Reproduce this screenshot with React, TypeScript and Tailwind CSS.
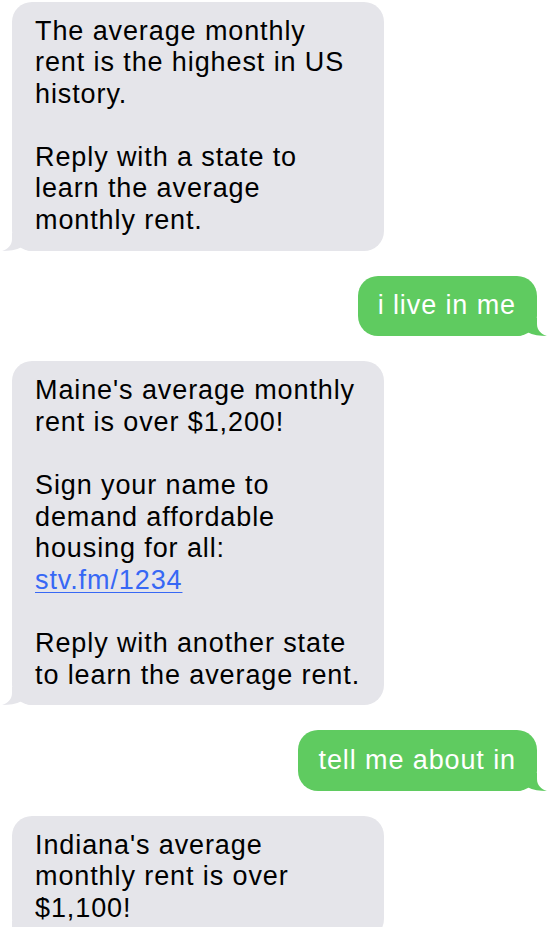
type Line = { text: string; link?: boolean };

type Message =
  | { from: "them"; paras: Line[][] }
  | { from: "me"; text: string };

const l = (text: string, link = false): Line => ({ text, link });

const messages: Message[] = [
  {
    from: "them",
    paras: [
      [l("The average monthly"), l("rent is the highest in US"), l("history.")],
      [l("Reply with a state to"), l("learn the average"), l("monthly rent.")],
    ],
  },
  { from: "me", text: "i live in me" },
  {
    from: "them",
    paras: [
      [l("Maine's average monthly"), l("rent is over $1,200!")],
      [
        l("Sign your name to"),
        l("demand affordable"),
        l("housing for all:"),
        l("stv.fm/1234", true),
      ],
      [l("Reply with another state"), l("to learn the average rent.")],
    ],
  },
  { from: "me", text: "tell me about in" },
  {
    from: "them",
    paras: [[l("Indiana's average"), l("monthly rent is over"), l("$1,100!")]],
  },
];

const GrayTail = () => (
  <svg
    className="absolute bottom-0 left-[-10px]"
    width="30"
    height="18"
    viewBox="0 0 30 18"
  >
    <path
      d="M10 0 L10 6 C10 12 6 16 0 18 C7 18 14 17 20 14 C23 16 26 18 30 18 L30 0 Z"
      fill="#e5e5ea"
    />
  </svg>
);

const GreenTail = () => (
  <svg
    className="absolute bottom-0 right-[-10px]"
    width="30"
    height="18"
    viewBox="0 0 30 18"
  >
    <path
      d="M20 0 L20 6 C20 12 24 16 30 18 C23 18 16 17 10 14 C7 16 4 18 0 18 L0 0 Z"
      fill="#5fcb60"
    />
  </svg>
);

const Incoming = ({ paras }: { paras: Line[][] }) => (
  <div className="relative self-start ml-[12px] w-[372px]">
    <GrayTail />
    <div className="relative rounded-[20px] bg-[#e5e5ea] pl-[23px] pr-4 py-[14px] text-black">
      {paras.map((para, i) => (
        <div key={i} className={i > 0 ? "mt-[31.6px]" : ""}>
          {para.map((line) =>
            line.link ? (
              <div key={line.text}>
                <span className="text-[#3768f5] underline decoration-1 underline-offset-[3px]">
                  {line.text}
                </span>
              </div>
            ) : (
              <div key={line.text}>{line.text}</div>
            )
          )}
        </div>
      ))}
    </div>
  </div>
);

const Outgoing = ({ text }: { text: string }) => (
  <div className="relative self-end mr-[14px]">
    <GreenTail />
    <div className="relative rounded-[20px] bg-[#5fcb60] pl-[20px] pr-[21px] py-[14.5px] text-white">
      {text}
    </div>
  </div>
);

export default function App() {
  return (
    <div className="min-h-screen bg-white pt-[1.5px] font-['Liberation_Sans',Arial,sans-serif] text-[27px] leading-[31.6px] tracking-[0.9px] whitespace-nowrap">
      <div className="flex flex-col gap-[25px] w-[551px]">
        {messages.map((m, i) =>
          m.from === "them" ? (
            <Incoming key={i} paras={m.paras} />
          ) : (
            <Outgoing key={i} text={m.text} />
          )
        )}
      </div>
    </div>
  );
}
